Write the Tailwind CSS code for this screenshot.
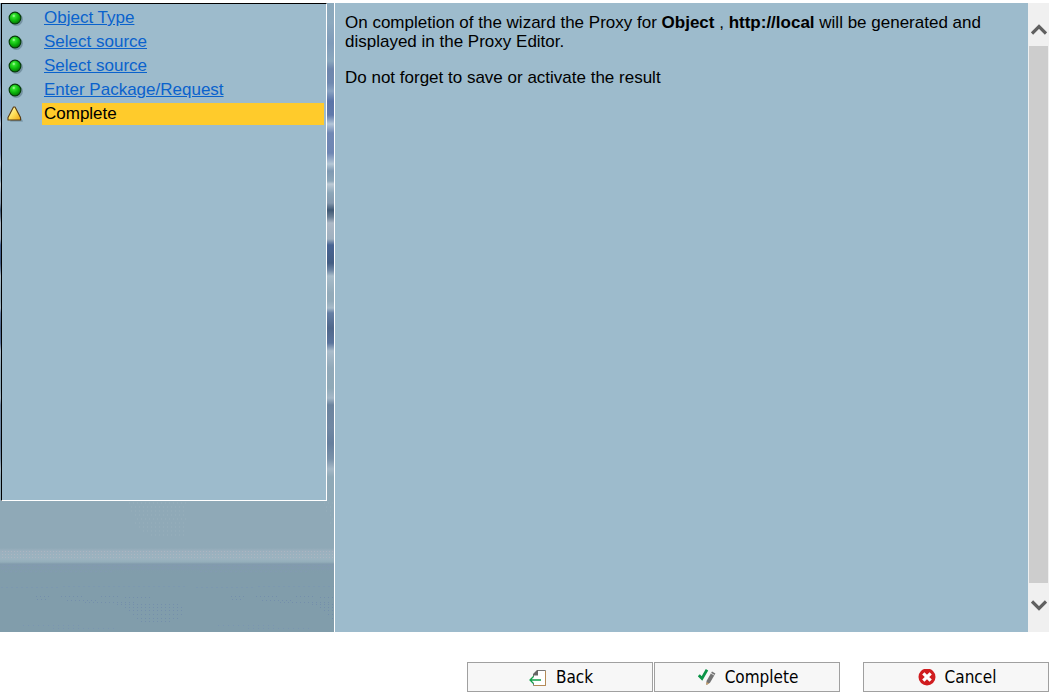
<!DOCTYPE html>
<html lang="en">
<head>
<meta charset="utf-8">
<meta name="viewport" content="width=device-width, initial-scale=1">
<title>Proxy Wizard</title>
<script src="https://cdn.jsdelivr.net/npm/@tailwindcss/browser@4"></script>
</head>
<body class="flex h-screen flex-col overflow-hidden bg-white pt-[3px] font-['Liberation_Sans',Arial,sans-serif] text-base text-black">
<svg class="absolute size-0" aria-hidden="true">
  <defs>
    <radialGradient id="led" cx="40%" cy="32%" r="70%">
      <stop offset="0" stop-color="#b8ffb0"/><stop offset=".22" stop-color="#2fe02a"/><stop offset=".6" stop-color="#0bb40b"/><stop offset="1" stop-color="#067006"/>
    </radialGradient>
    <linearGradient id="warn" x1="0" x2="1" y1="0" y2="1">
      <stop offset="0" stop-color="#fffbd8"/><stop offset=".5" stop-color="#ffe05a"/><stop offset="1" stop-color="#efa510"/>
    </linearGradient>
    <symbol id="done" viewBox="0 0 16 16">
      <circle cx="9.200" cy="9.200" r="5.800" fill="#5f7c8c" opacity=".65"/>
      <circle cx="8" cy="8" r="5.200" fill="url(#led)" stroke="#063c0a" stroke-width="1"/>
    </symbol>
  </defs>
</svg>
<main class="mr-[2px] flex min-h-0 flex-1">
  <aside class="flex w-[335px] shrink-0 flex-col border-r border-white bg-[linear-gradient(to_bottom,#8ba9bc_0px,#8ca9be_20px,#7f9bb9_40px,#8ba8be_58px,#6e86ac_66px,#7089b0_80px,#8ba4c2_88px,#5a74a8_98px,#6079ab_112px,#b3c6d8_121px,#7188b4_130px,#6f86b3_150px,#b5c8d6_161px,#7f99b2_168px,#8da7b9_178px,#bccad5_181px,#8ca6b8_190px,#8498ad_200px,#3f5873_207px,#6a7f95_214px,#adb9c6_220px,#9fb0bf_236px,#486493_242px,#435d83_260px,#6d85a2_267px,#a9bdca_273px,#93abba_290px,#93abba_298px,#a7bbc9_305px,#667fa4_310px,#4f678a_325px,#5b749c_340px,#abbdcb_348px,#91a9b9_365px,#8fa9b7_385px,#a5b8c7_395px,#6c849e_402px,#7188a3_425px,#667f9d_440px,#7a92a9_456px,#a6b9c7_466px,#8fa9b7_474px,#8fa9b7_545px,#9bb0be_548px,#9bb3c0_556px,#94aeba_559px,#829bad_561px,#819dab_570px,#819dab_100%)]">
    <nav aria-label="Wizard steps" class="mr-[7px] ml-px h-[498px] shrink-0 border border-t-black border-r-white border-b-white border-l-black bg-[#9dbbcc] pt-[3px] pr-[2px]">
      <ol class="flex flex-col gap-[2px] text-[17px] leading-[22px]">
        <li class="flex items-center gap-[19px] pl-1"><svg class="size-[18px] shrink-0" aria-hidden="true"><use href="#done"/></svg><a class="pl-px text-[#0a62cc] underline" href="#object-type">Object Type</a></li>
        <li class="flex items-center gap-[19px] pl-1"><svg class="size-[18px] shrink-0" aria-hidden="true"><use href="#done"/></svg><a class="pl-px text-[#0a62cc] underline" href="#source">Select source</a></li>
        <li class="flex items-center gap-[19px] pl-1"><svg class="size-[18px] shrink-0" aria-hidden="true"><use href="#done"/></svg><a class="pl-px text-[#0a62cc] underline" href="#source-2">Select source</a></li>
        <li class="flex items-center gap-[19px] pl-1"><svg class="size-[18px] shrink-0" aria-hidden="true"><use href="#done"/></svg><a class="pl-px text-[#0a62cc] underline" href="#package">Enter Package/Request</a></li>
        <li class="flex items-center gap-[18px] pl-1" aria-current="step"><svg class="size-[18px] shrink-0" viewBox="0 0 18 18" aria-hidden="true"><path d="M10 3.500 17 16.500H4z" fill="#5f7c8c" opacity=".7"/><path d="M8 2h1l5.500 10.500v2.500H2v-2.500L7.500 2z" fill="url(#warn)" stroke="#5a3c10" stroke-width="1.100" stroke-linejoin="round"/></svg><span class="flex-1 bg-[#ffcb2b] pl-[2px]">Complete</span></li>
      </ol>
    </nav>
    <svg class="min-h-0 w-full flex-1" aria-hidden="true">
      <defs>
        <pattern id="mist" width="195" height="140" patternUnits="userSpaceOnUse" x="-7">
          <path d="M136 2h58M138 6h56M138 10h56M142 14h52M144 18h50M142 22h52M146 26h48M150 30h44M158 34h36" stroke="#9fb4bf" stroke-dasharray="1 3" opacity=".6"/>
          <path d="M0 50.500h195M0 53.500h195M0 56.500h195" stroke="#b5b8c2" stroke-dasharray="1 2" opacity=".7"/>
          <path d="M0 64.500h195M4 67.500h191M12 70.500h110" stroke="#8498b5" stroke-dasharray="2 3" opacity=".6"/>
          <path d="M8 86.500h60M70 85.500h124" stroke="#7894b2" stroke-dasharray="2 3" opacity=".6"/>
          <path d="M43 95.500h14M68 95.500h24M108 95.500h20M132 96.500h28M44 98.500h12M74 99.500h30M92 101.500h50M124 103.500h62M132 106.500h58M136 109.500h56M140 113.500h52M144 117.500h44M148 120.500h30" stroke="#708cab" stroke-dasharray="1 3" opacity=".8"/>
          <path d="M30 124.500h56M60 127.500h64" stroke="#7894b2" stroke-dasharray="1 4" opacity=".8"/>
        </pattern>
      </defs>
      <rect width="100%" height="100%" fill="url(#mist)"/>
    </svg>
  </aside>
  <section class="min-w-0 flex-1 bg-[#9dbbcc] px-[10px] pt-[10px] text-[17px] leading-[19px]">
    <p>On completion of the wizard the Proxy for <b>Object</b> , <b>http://local</b> will be generated and<br>displayed in the Proxy Editor.</p>
    <p class="mt-[17px]">Do not forget to save or activate the result</p>
  </section>
  <div class="flex w-[21px] shrink-0 flex-col bg-[#f0f0f0] px-px">
    <button type="button" aria-label="Scroll up" class="flex h-[43px] shrink-0 items-center justify-center pt-[9px]"><svg class="h-[12px] w-[16px]" viewBox="0 0 16 12" fill="none" stroke="#606060" stroke-width="3.200"><path d="M1 10.500 8 3.500l7 7"/></svg></button>
    <div class="min-h-0 flex-1 bg-[#cdcdcd]"></div>
    <button type="button" aria-label="Scroll down" class="flex h-[49px] shrink-0 items-center justify-center pb-[5px]"><svg class="h-[12px] w-[16px]" viewBox="0 0 16 12" fill="none" stroke="#606060" stroke-width="3.200"><path d="m1 2.500 7 7 7-7"/></svg></button>
  </div>
</main>
<footer class="flex shrink-0 justify-end gap-px pt-[30px] pr-[2px] pb-[4px] font-['DejaVu_Sans_Condensed','DejaVu_Sans',sans-serif] text-[17px]">
  <button type="button" class="flex h-[30px] w-[186px] items-center justify-center gap-[9px] border border-[#a0a0a0] bg-[#f7f7f7] pt-[2px] pl-[2px]">
    <svg class="size-[18px]" viewBox="0 0 18 18" fill="none" aria-hidden="true"><path d="M4.500 8V5.500L8.500 1.500h8v15h-12V14" fill="#fff" stroke="#777"/><path d="M16.500 2v14.500H5" stroke="#b58a55"/><path d="M4 6.500V5l4-4h1v5.500z" fill="#666"/><path d="M12 11H1M4.500 7.500 1 11 4.500 14.500" stroke="#12a04a" stroke-width="1.300"/></svg>Back
  </button>
  <button type="button" class="flex h-[30px] w-[186px] items-center justify-center gap-[9px] border border-[#a0a0a0] bg-[#f7f7f7] pt-[2px] pl-[2px]">
    <svg class="size-[18px]" viewBox="0 0 18 18" fill="none" aria-hidden="true"><path d="M.8 6.200 4 9.500 9 .8" stroke="#0a9447" stroke-width="2.800"/><path d="m8.500 12 5.500-9.500 3.400 1.900-5.400 9.300-3.600 2.300z" fill="#747474"/><path d="m13 4.300 3.400 1.900" stroke="#f7f7f7" stroke-width=".8"/><path d="M8.400 13v3l2.800-1.500z" fill="#c9a06a"/></svg>Complete
  </button>
  <button type="button" class="ml-[22px] flex h-[30px] w-[186px] items-center justify-center gap-[9px] border border-[#a0a0a0] bg-[#f7f7f7] pt-[2px] pl-[2px]">
    <svg class="size-[18px]" viewBox="0 0 18 18" aria-hidden="true"><circle cx="9" cy="8" r="8.500" fill="#d01c1f"/><path d="m5.300 4.300 7.400 7.400m0-7.400-7.400 7.400" stroke="#fff" stroke-width="3.200"/></svg>Cancel
  </button>
</footer>
</body>
</html>
